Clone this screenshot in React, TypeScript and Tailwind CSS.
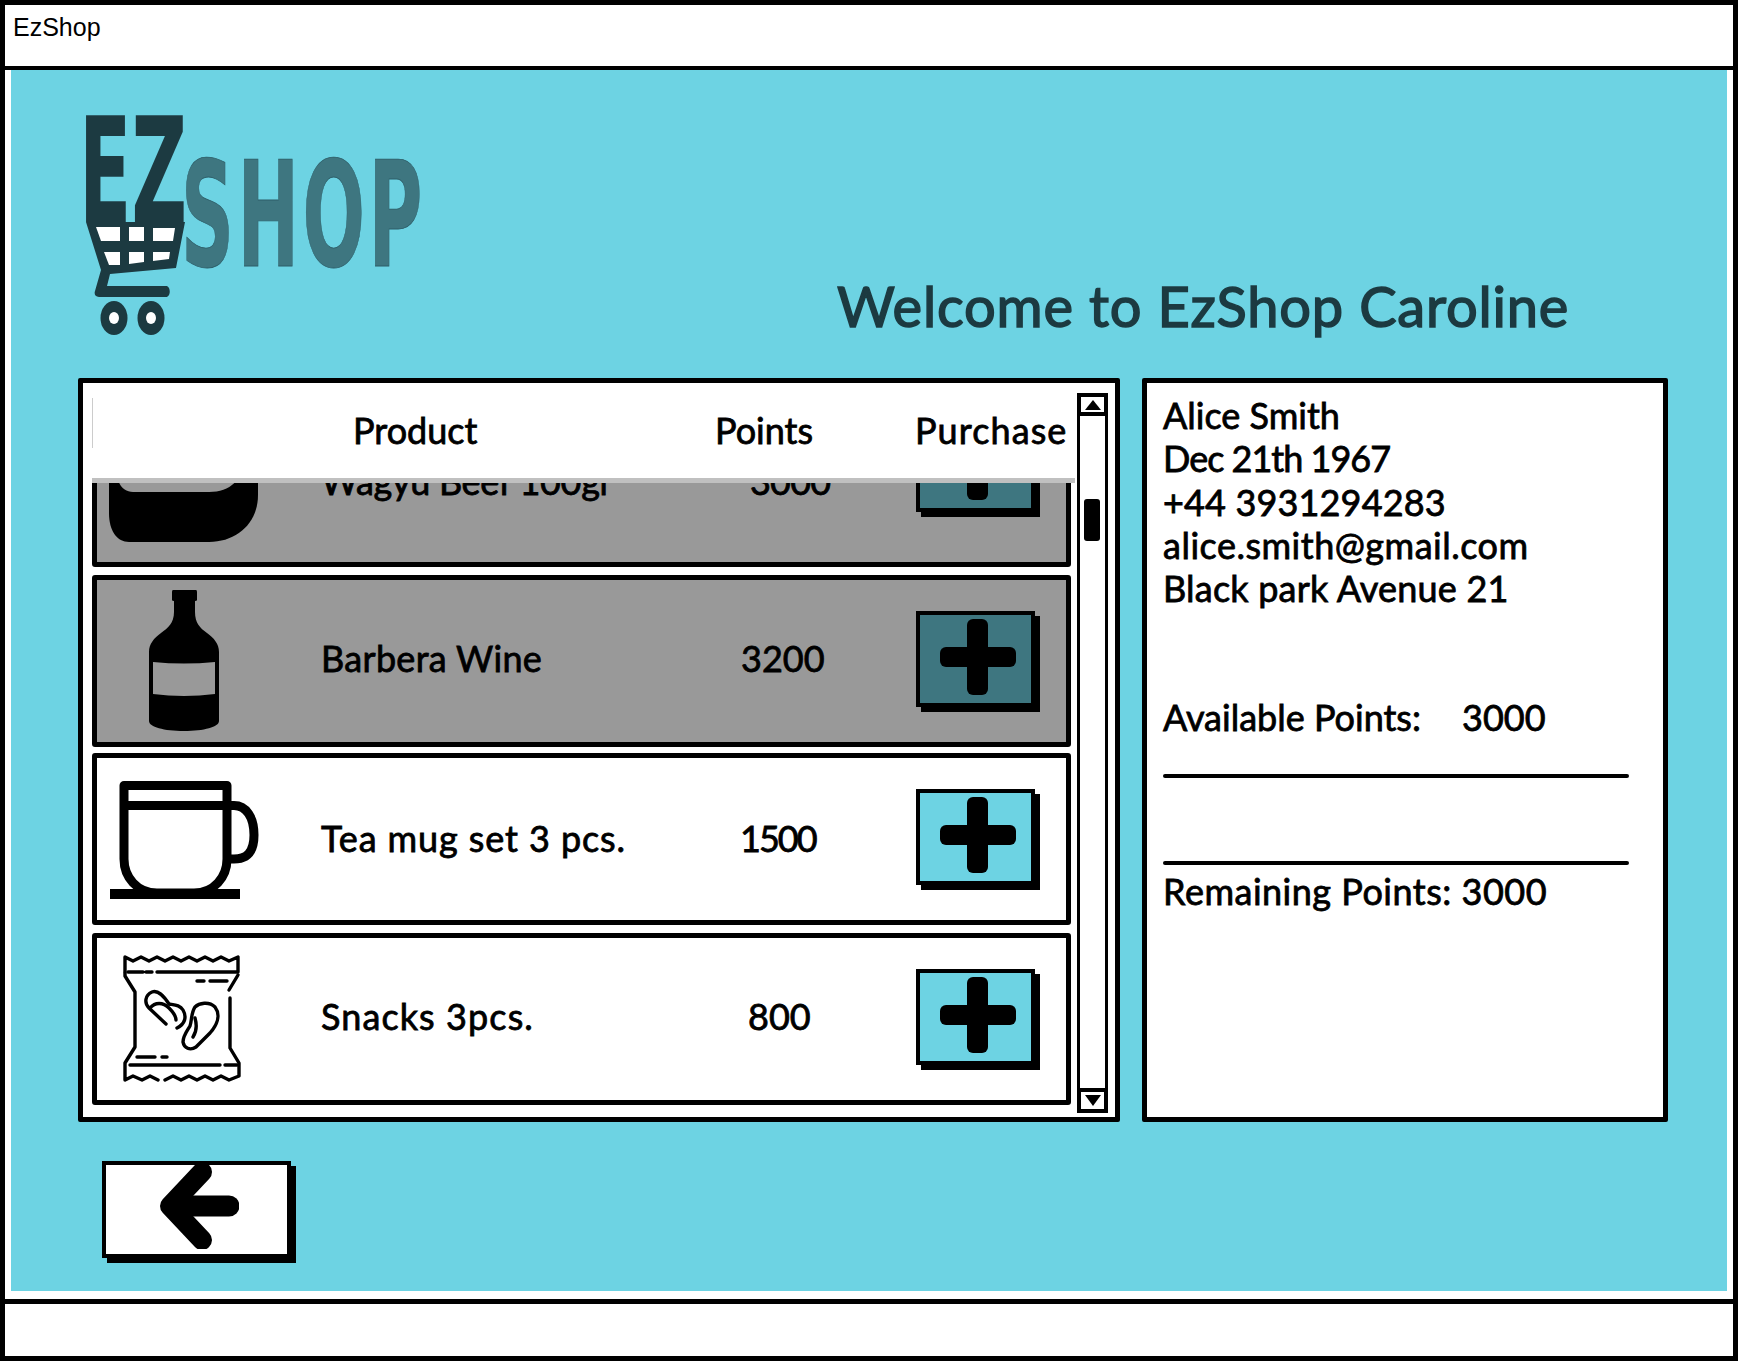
const sk = { fontFamily: "Lato, 'Open Sans', sans-serif" };

function Plus() {
  return (
    <svg width="76" height="76" viewBox="0 0 76 76" className="block ml-[4px] mb-[4px]">
      <rect x="27" y="0" width="21" height="76" rx="6" fill="#000" />
      <rect x="0" y="28" width="76" height="20" rx="6" fill="#000" />
    </svg>
  );
}

function BuyButton({ fill }: { fill: string }) {
  return (
    <div className="relative w-[124px] h-[101px]">
      <div className="absolute left-[5px] top-[5px] right-0 bottom-0 bg-black" />
      <div className={`absolute left-0 top-0 right-[5px] bottom-[5px] border-[4px] border-black flex items-center justify-center ${fill}`}>
        <Plus />
      </div>
    </div>
  );
}

function Steak() {
  return (
    <svg width="150" height="172" viewBox="0 0 150 172" className="block">
      <path d="M0 0H149V100C149 128 128 147 100 147H20C8 147 0 136 0 118Z" fill="#000" />
      <path d="M8 0H135V72C130 88 118 97 100 97H24C14 97 8 88 8 78Z" fill="#999999" />
    </svg>
  );
}

function Bottle() {
  return (
    <svg width="70" height="141" viewBox="0 0 70 141" className="block">
      <path
        fill="#000"
        d="M24 0H47Q48 0 48 2V10Q48 11 46 11H46V22C46 33 51 38 58 43C65 48 70 54 70 62V131C70 137 55 141 35 141C15 141 0 137 0 131V62C0 54 5 48 12 43C19 38 25 33 25 22V11Q23 11 23 10V2Q23 0 24 0Z"
      />
      <path d="M4 72Q35 75 66 72V104Q35 108 4 104Z" fill="#999999" />
    </svg>
  );
}

function Mug() {
  return (
    <svg width="150" height="118" viewBox="0 0 150 118" className="block">
      <g fill="none" stroke="#000" strokeWidth="9" strokeLinejoin="round">
        <path d="M14 4.500H117V78C117 96 104 112 84 112H47C27 112 14 96 14 78Z" />
        <path d="M14 24.500H117" />
        <path d="M117 24.500H124C136 24.500 144 36 144 54C144 72 136 78 124 78H117" />
      </g>
      <rect x="0" y="108" width="130" height="10" fill="#000" />
    </svg>
  );
}

function Snacks() {
  return (
    <svg width="118" height="130" viewBox="-2 -2 118 130" className="block">
      <g fill="none" stroke="#000" strokeWidth="3.400" strokeLinecap="round" strokeLinejoin="round">
        <path d="M0 17V2L8 6L16 2L24 6L32 2L40 6L48 2L56 6L64 2L72 6L80 2L88 6L96 2L104 6L113 2V17" />
        <path d="M3 17H18M21 17H27M32 17H112" />
        <path d="M0 18V21L10 37V92L0 108V125L8 121L17 125L25 121L33 125" />
        <path d="M40 125L48 121L56 125L64 121L72 125L80 121L88 125L96 121L104 125L114 121V108L105 93V43" />
        <path d="M113 20L104 35" />
        <path d="M5 110H95M100 110H112" />
        <path d="M72 26H79M85 26H102" />
        <path d="M12 102H30M37 102H42" />
        <path d="M41 69L24 53C19 48 20 40 27 37C33 35 38 40 44 49C50 50 55 50 58 55C62 62 60 69 52 73" />
        <path d="M25 53C30 47 38 47 44 53C49 58 51 62 51 65" />
        <path d="M70 52C74 48 84 46 90 52C96 60 92 70 85 78L71 92C65 96 59 93 58 87C58 81 62 76 65 71C67 65 66 58 70 52" />
        <path d="M70 63C72 70 72 76 68 82" />
      </g>
    </svg>
  );
}

type RowProps = {
  icon: React.ReactNode;
  name: string;
  pts: string;
  grey?: boolean;
  iconCls: string;
  ptsCls: string;
  nameCls: string;
  btnCls: string;
  cls?: string;
};

function Row({ icon, name, pts, grey, iconCls, ptsCls, nameCls, btnCls, cls }: RowProps) {
  return (
    <div className={`relative shrink-0 h-[172px] w-[979px] border-[5px] border-black rounded-[3px] flex items-center ${grey ? "bg-[#999999]" : "bg-white"} ${cls ?? ""}`}>
      <div className={iconCls}>{icon}</div>
      <span className={`absolute left-[224px] text-[36px] leading-[44px] text-black [-webkit-text-stroke:0.8px_black] whitespace-nowrap ${nameCls}`} style={sk}>{name}</span>
      <span className={`absolute text-[36px] leading-[44px] text-black [-webkit-text-stroke:0.8px_black] ${ptsCls}`} style={sk}>{pts}</span>
      <div className={`absolute left-[819px] ${btnCls}`}>
        <BuyButton fill={grey ? "bg-[#3e7680]" : "bg-[#6dd3e3]"} />
      </div>
    </div>
  );
}

function Scrollbar() {
  return (
    <div className="w-[31px] h-[720px] mt-[10px] ml-[2px] flex flex-col border-[3px] border-t-0 border-b-0 border-black">
      <div className="h-[23px] -mx-[3px] border-[4px] border-black rounded-[3px] bg-white flex items-center justify-center">
        <div className="w-0 h-0 border-l-[8px] border-r-[8px] border-b-[10px] border-l-transparent border-r-transparent border-b-black" />
      </div>
      <div className="flex-1 bg-white px-[4px] pt-[83px]">
        <div className="w-[16px] h-[42px] bg-black rounded-[3px]" />
      </div>
      <div className="h-[25px] -mx-[3px] border-[4px] border-black bg-white flex items-center justify-center">
        <div className="w-0 h-0 border-l-[8px] border-r-[8px] border-t-[11px] border-l-transparent border-r-transparent border-t-black" />
      </div>
    </div>
  );
}

export default function App() {
  const infoText = "text-[36px] leading-[43.300px] text-black [-webkit-text-stroke:0.8px_black] whitespace-nowrap";
  return (
    <div className="w-[1738px] h-[1362px] bg-white flex flex-col overflow-hidden">
      <header className="h-[70px] shrink-0 border-[5px] border-b-[4px] border-black bg-white pl-[8px] pt-[8px]">
        <span className="text-[25px] leading-[28px] text-black" style={{ fontFamily: "'Liberation Sans', sans-serif" }}>EzShop</span>
      </header>

      <div className="flex-1 border-x-[5px] border-black px-[6px] pb-[8px] flex min-h-0">
        <main className="flex-1 bg-[#6dd3e3] flex flex-col min-h-0">
          <div className="h-[308px] shrink-0 flex">
            <svg width="360" height="240" viewBox="80 110 360 240" className="block mt-[40px] ml-[69px] shrink-0">
              <text x="79" y="222" textLength="108" lengthAdjust="spacingAndGlyphs" fontFamily="'DejaVu Sans', sans-serif" fontWeight="700" fontSize="147" fill="#1c3a41">EZ</text>
              <text x="181" y="266" textLength="245" lengthAdjust="spacingAndGlyphs" letterSpacing="7" fontFamily="'DejaVu Sans', sans-serif" fontWeight="700" fontSize="147" fill="#3e7680" stroke="#2e5f69" strokeWidth="0.800">SHOP</text>
              <path fill="#1c3a41" d="M86 222H185L176 268L110 274L107 286H166C171 286 171 297 166 297H99C95 297 94 294 95 291L101 270Z" />
              <g fill="#fff">
                <path d="M96 227H120V241H101Z" />
                <path d="M129 227H144V241H129Z" />
                <path d="M153 228H175L173 241H153Z" />
                <path d="M104 252H120V265H109Z" />
                <path d="M129 252H144V262L129 264Z" />
                <path d="M153 252H170L169 259L153 261Z" />
              </g>
              <ellipse cx="114" cy="318" rx="13.500" ry="17" fill="#1c3a41" />
              <ellipse cx="151" cy="318" rx="13.500" ry="17" fill="#1c3a41" />
              <ellipse cx="114" cy="318" rx="5" ry="6" fill="#fff" />
              <ellipse cx="151" cy="318" rx="5" ry="6" fill="#fff" />
            </svg>
            <h1 className="ml-[397px] mt-[204px] h-fit text-[56px] leading-[64px] tracking-[0.8px] font-normal text-[#1c3a41] [-webkit-text-stroke:1.500px_#1c3a41] whitespace-nowrap" style={sk}>Welcome to EzShop Caroline</h1>
          </div>

          <div className="flex h-[744px] shrink-0 ml-[67px] gap-[22px]">
            <section className="w-[1042px] border-[5px] border-black rounded-[2px] bg-white flex pl-[9px] pr-[7px]">
              <div className="w-[985px] flex flex-col h-full">
                <div className="relative z-10 h-[100px] shrink-0 bg-white border-b-[5px] border-[#c0c0c0] text-[36px] leading-[44px] text-black [-webkit-text-stroke:0.8px_black]" style={sk}>
                  <div className="absolute left-0 top-[15px] w-px h-[50px] bg-[#cccccc]" />
                  <span className="absolute left-[261px] top-[25px]">Product</span>
                  <span className="absolute left-[623px] top-[25px]">Points</span>
                  <span className="absolute left-[823px] top-[25px] tracking-[1.100px]">Purchase</span>
                </div>
                <div className="flex-1 min-h-0 overflow-hidden flex flex-col justify-end pb-[12px]">
                  <Row cls="mb-[8px]" btnCls="top-[16px]" icon={<Steak />} name="Wagyu Beef 100gr" pts="3000" grey iconCls="absolute left-[12px] -top-[5px]" nameCls="top-[59px] tracking-[-0.3px]" ptsCls="top-[59px] left-[653px] tracking-[-0.8px]" />
                  <Row cls="mb-[6px]" btnCls="top-[31px]" icon={<Bottle />} name="Barbera Wine" pts="3200" grey iconCls="absolute left-[52px] top-[10px]" nameCls="top-[56px] tracking-[0.3px]" ptsCls="top-[56px] left-[644px]" />
                  <Row cls="mb-[8px]" btnCls="top-[31px]" icon={<Mug />} name="Tea mug set 3 pcs." pts="1500" iconCls="absolute left-[13px] top-[23px]" nameCls="top-[58px] tracking-[0.9px]" ptsCls="top-[58px] left-[643px] tracking-[-2px]" />
                  <Row btnCls="top-[31px]" icon={<Snacks />} name="Snacks 3pcs." pts="800" iconCls="absolute left-[26px] top-[15px]" nameCls="top-[56px] tracking-[1.1px]" ptsCls="top-[56px] left-[651px]" />
                </div>
              </div>
              <Scrollbar />
            </section>

            <aside className="w-[526px] border-[5px] border-black rounded-[2px] bg-white pl-[16px] pr-[34px] pt-[11px]" style={sk}>
              <div className={infoText}>Alice Smith</div>
              <div className={`${infoText} tracking-[-1px]`}>Dec 21th 1967</div>
              <div className={`${infoText} tracking-[0.15px]`}>+44 3931294283</div>
              <div className={`${infoText} tracking-[0.5px]`}>alice.smith@gmail.com</div>
              <div className={`${infoText} tracking-[0.2px]`}>Black park Avenue 21</div>
              <div className={`${infoText} mt-[86px] flex`}>
                <span className="w-[299px]">Available Points:</span>
                <span>3000</span>
              </div>
              <div className="h-[4px] bg-black rounded-full mt-[34px]" />
              <div className="h-[4px] bg-black rounded-full mt-[83px]" />
              <div className={`${infoText} mt-[5px] tracking-[0.5px]`}>Remaining Points: 3000</div>
            </aside>
          </div>

          <div className="ml-[91px] mt-[39px] relative w-[194px] h-[102px] shrink-0">
            <div className="absolute left-[5px] top-[5px] right-0 bottom-0 bg-black" />
            <div className="absolute left-0 top-0 right-[5px] bottom-[5px] border-[4px] border-black bg-white" />
            <svg width="80" height="86" viewBox="0 0 80 86" className="absolute left-[57px] top-[2px]">
              <path d="M43 9L11 43L43 77" fill="none" stroke="#000" strokeWidth="20" strokeLinecap="round" strokeLinejoin="round" />
              <path d="M15 43H70" fill="none" stroke="#000" strokeWidth="21" strokeLinecap="round" />
            </svg>
          </div>
        </main>
      </div>

      <footer className="h-[62px] shrink-0 border-x-[5px] border-t-[5px] border-b-[5px] border-black bg-white mb-px" />
    </div>
  );
}
